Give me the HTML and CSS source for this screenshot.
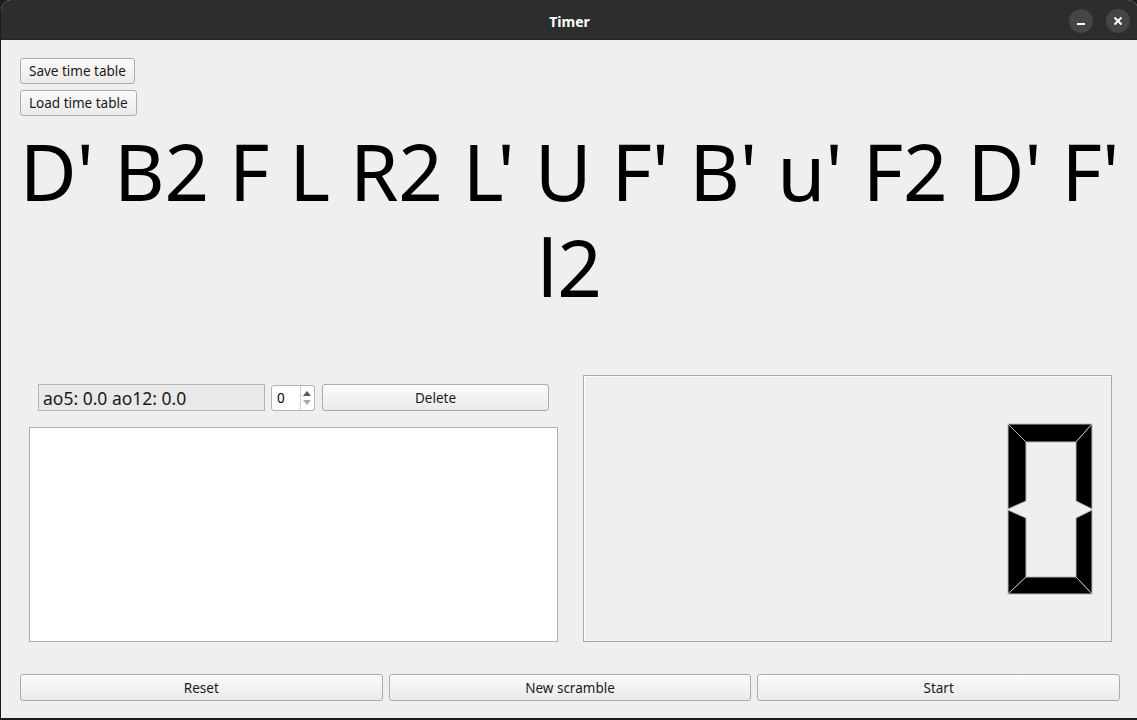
FILE: index.html
```html
<!DOCTYPE html>
<html>
<head>
<meta charset="utf-8">
<link rel="stylesheet" href="styles.css">
</head>
<body>
<div class="window">
  <div class="titlebar">
    <span class="title">Timer</span>
    <div class="wbtns">
      <span class="wbtn"><svg width="10" height="10" viewBox="0 0 10 10"><rect x="1" y="7" width="8" height="2" fill="#fff"/></svg></span>
      <span class="wbtn"><svg width="10" height="10" viewBox="0 0 10 10"><path d="M1.5 1.5L8.5 8.5M8.5 1.5L1.5 8.5" stroke="#fff" stroke-width="2"/></svg></span>
    </div>
  </div>
  <div class="content">
    <div class="filebtns">
      <button class="btn small">Save time table</button>
      <button class="btn small">Load time table</button>
    </div>
    <div class="scramble">D' B2 F L R2 L' U F' B' u' F2 D' F' l2</div>
    <div class="middle">
      <div class="leftpane">
        <div class="toolrow">
          <div class="avg">ao5: 0.0 ao12: 0.0</div>
          <div class="spin">
            <span class="spinval">0</span>
            <span class="arrows">
              <svg width="8" height="5" viewBox="0 0 8 5"><path d="M4 0L8 5H0Z" fill="#555"/></svg>
              <svg width="8" height="5" viewBox="0 0 8 5"><path d="M0 0H8L4 5Z" fill="#aaa"/></svg>
            </span>
          </div>
          <button class="btn del">Delete</button>
        </div>
        <div class="list"></div>
      </div>
      <div class="lcd">
        <svg class="digit" width="86" height="172" viewBox="-1 -1 86 172">
          <g fill="#000" stroke="#b8b8b8" stroke-width="1">
            <polygon points="0,0 84,0 68,18 18,18"/>
            <polygon points="0,0 18,18 18,77 0,85"/>
            <polygon points="84,0 84,85 68,77 68,18"/>
            <polygon points="0,86 18,94 18,153 0,170"/>
            <polygon points="84,86 84,170 68,153 68,94"/>
            <polygon points="0,170 18,153 68,153 84,170"/>
          </g>
        </svg>
      </div>
    </div>
    <div class="bottom">
      <button class="btn">Reset</button>
      <button class="btn">New scramble</button>
      <button class="btn">Start</button>
    </div>
  </div>
</div>
</body>
</html>
```
FILE: styles.css
```css
* { box-sizing: border-box; }
html, body { margin: 0; padding: 0; }
body {
  width: 1137px;
  height: 720px;
  background: #1c1c1c;
  font-family: "Noto Sans", "DejaVu Sans", sans-serif;
  overflow: hidden;
}
.window {
  width: 1137px;
  height: 718px;
  margin-left: 1px;
  border-radius: 10px 10px 0 0;
  overflow: hidden;
  background: #efefef;
  display: flex;
  flex-direction: column;
}
.titlebar {
  height: 40px;
  background: #2d2d2d;
  position: relative;
  display: flex;
  align-items: center;
  justify-content: center;
  border-bottom: 1px solid #252525;
  padding-top: 3px;
}
.title {
  color: #fff;
  font-weight: bold;
  font-size: 14px;
}
.wbtns {
  position: absolute;
  right: 8px;
  top: 9px;
  display: flex;
  gap: 13px;
}
.wbtn {
  width: 24px;
  height: 24px;
  border-radius: 50%;
  background: #454545;
  display: flex;
  align-items: center;
  justify-content: center;
}
.content {
  flex: 1;
  padding: 18px 18px 0 19px;
  display: flex;
  flex-direction: column;
}
.btn {
  font-family: inherit;
  font-size: 13.5px;
  color: #1a1a1a;
  background: linear-gradient(#fbfbfb, #eaeaea);
  border: 1px solid #ababab;
  border-radius: 3px;
  height: 27px;
  padding: 0;
}
.filebtns {
  display: flex;
  flex-direction: column;
  align-items: flex-start;
  gap: 6px;
}
.btn.small {
  height: 26px;
  padding: 0 8px;
}
.scramble {
  margin: 7px -18px 0 -19px;
  font-size: 78px;
  line-height: 96px;
  text-align: center;
  color: #000;
  letter-spacing: -0.2px;
}
.middle {
  margin-top: 60px;
  display: flex;
  gap: 25px;
  height: 267px;
}
.leftpane {
  width: 538px;
  flex: none;
  padding: 9px 0 0 9px;
  display: flex;
  flex-direction: column;
}
.toolrow {
  display: flex;
  align-items: center;
  padding-left: 9px;
  padding-right: 9px;
  height: 27px;
}
.avg {
  width: 227px;
  height: 27px;
  border: 1px solid #b4b4b4;
  background: #e9e9e9;
  font-size: 17.5px;
  color: #1a1a1a;
  padding-left: 4px;
  line-height: 26px;
  white-space: nowrap;
}
.spin {
  width: 44px;
  height: 26px;
  margin: 0 7px 0 6px;
  border: 1px solid #b4b4b4;
  border-radius: 3px;
  background: #fff;
  display: flex;
  align-items: center;
  justify-content: space-between;
  padding: 0 3px 0 5px;
  font-size: 13.5px;
}
.arrows {
  display: flex;
  flex-direction: column;
  gap: 4px;
  border-left: 1px solid #d0d0d0;
  padding-left: 2px;
  height: 24px;
  justify-content: center;
}
.arrows svg { display: block; }
.btn.del { flex: 1; }
.list {
  margin-top: 16px;
  height: 215px;
  background: #fff;
  border: 1px solid #b0b0b0;
}
.lcd {
  width: 529px;
  flex: none;
  border: 1px solid #a9a9a9;
  box-shadow: inset 1px 1px 0 #fff;
  display: flex;
  justify-content: flex-end;
  align-items: center;
  padding-right: 18px;
}
.digit { display: block; }
.bottom {
  margin-top: 32px;
  display: grid;
  grid-template-columns: 1fr 1fr 1fr;
  gap: 6px;
}
```
